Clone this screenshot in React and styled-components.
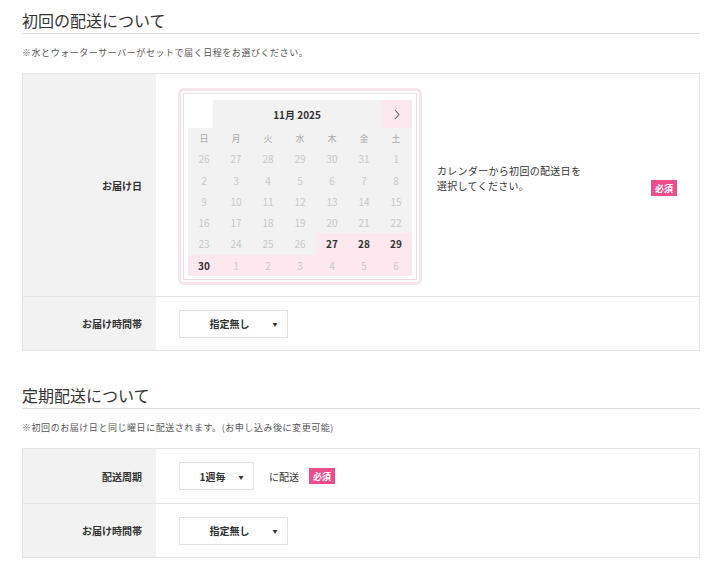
import React from 'react';
import styled, { createGlobalStyle } from 'styled-components';

const GlobalStyle = createGlobalStyle`
  body {
    margin: 0;
    background: #fff;
    font-family: "Noto Sans", "Noto Sans CJK JP", sans-serif;
    color: #333;
  }
`;

const Page = styled.div`
  padding: 10px 15px 0 22px;
`;

const Section = styled.section`
  & + & {
    margin-top: 34px;
  }
`;

const Heading = styled.h2`
  margin: 0;
  font-size: 16px;
  line-height: 21px;
  font-weight: 400;
  color: #333;
  padding-bottom: 2px;
  border-bottom: 1px solid #dcdcdc;
  font-family: "Noto Sans CJK JP", sans-serif;
`;

const Note = styled.p`
  margin: 12px 0 13px;
  font-size: 9px;
  line-height: 14px;
  letter-spacing: 0.55px;
  color: #555;
  font-family: "Noto Sans CJK JP", sans-serif;
`;

const Table = styled.div`
  border: 1px solid #e4e4e4;
`;

const Row = styled.div`
  display: flex;
  min-height: ${(p) => p.$h}px;
  & + & {
    border-top: 1px solid #e4e4e4;
  }
`;

const Label = styled.div`
  width: 133px;
  flex-shrink: 0;
  background: #f2f2f2;
  display: flex;
  align-items: center;
  justify-content: flex-end;
  padding-right: 14px;
  box-sizing: border-box;
  font-size: 10px;
  font-weight: 700;
  color: #333;
  font-family: "Noto Sans CJK JP", sans-serif;
`;

const Content = styled.div`
  flex: 1;
  display: flex;
  align-items: center;
  padding: 0 22px 0 23px;
  font-family: "Noto Sans CJK JP", sans-serif;
`;

const Badge = styled.span`
  display: inline-flex;
  align-items: center;
  justify-content: center;
  width: 26px;
  height: 16px;
  background: #ec4c8b;
  color: #fff;
  font-size: 9px;
  font-weight: 700;
  margin-left: ${(p) => (p.$auto ? 'auto' : '10px')};
  margin-top: ${(p) => (p.$auto ? '6px' : '0')};
`;

const Select = styled.div`
  display: flex;
  align-items: center;
  width: ${(p) => p.$w}px;
  height: 28px;
  box-sizing: border-box;
  border: 1px solid #e2e2e2;
  background: #fff;
  font-size: 10px;
  font-weight: 700;
  color: #333;
`;

const SelectText = styled.span`
  flex: 1;
  text-align: center;
  padding-left: 16px;
`;

const SelectArrow = styled.span`
  width: 24px;
  text-align: center;
  font-size: 5px;
  color: #333;
`;

const Suffix = styled.span`
  margin-left: 15px;
  font-size: 10px;
  color: #333;
`;

const Hint = styled.p`
  margin: 0 0 14px 15px;
  font-size: 10px;
  line-height: 15px;
  color: #333;
  letter-spacing: 0.3px;
`;

const CalendarOuter = styled.div`
  margin: 14px 0 11px -1px;
  border: 3px solid #f9e3ea;
  border-radius: 6px;
  padding: 2px;
`;

const CalendarInner = styled.div`
  border: 1px solid #f5dbe3;
  padding: 6px 4px 3px;
  width: 224px;
`;

const CalHeader = styled.div`
  display: flex;
  height: 28px;
`;

const CalPrev = styled.div`
  width: 25px;
  background: #fff;
`;

const CalTitle = styled.div`
  flex: 1;
  background: #f2f2f2;
  display: flex;
  align-items: center;
  justify-content: center;
  font-size: 10px;
  font-weight: 700;
  color: #333;
`;

const CalNext = styled.div`
  width: 31px;
  background: #fce8ee;
  display: flex;
  align-items: center;
  justify-content: center;
`;

const Grid = styled.div`
  display: grid;
  grid-template-columns: repeat(7, 32px);
  grid-template-rows: 20px;
  grid-auto-rows: 21.3px;
`;

const DayName = styled.div`
  display: flex;
  align-items: center;
  justify-content: center;
  background: #f2f2f2;
  font-size: 9px;
  color: #a8a8a8;
`;

const Cell = styled.div`
  display: flex;
  align-items: center;
  justify-content: center;
  font-size: 10px;
  background: ${(p) => (p.$kind === 'off' ? '#f2f2f2' : '#fce8ee')};
  color: ${(p) => (p.$kind === 'on' ? '#333' : '#c8c8c8')};
  font-weight: ${(p) => (p.$kind === 'on' ? 700 : 400)};
`;

const dayNames = ['日', '月', '火', '水', '木', '金', '土'];

const weeks = [
  [26, 27, 28, 29, 30, 31, 1].map((d) => [d, 'off']),
  [2, 3, 4, 5, 6, 7, 8].map((d) => [d, 'off']),
  [9, 10, 11, 12, 13, 14, 15].map((d) => [d, 'off']),
  [16, 17, 18, 19, 20, 21, 22].map((d) => [d, 'off']),
  [[23, 'off'], [24, 'off'], [25, 'off'], [26, 'off'], [27, 'on'], [28, 'on'], [29, 'on']],
  [[30, 'on'], [1, 'next'], [2, 'next'], [3, 'next'], [4, 'next'], [5, 'next'], [6, 'next']],
];

const Calendar = () => (
  <CalendarOuter>
    <CalendarInner>
      <CalHeader>
        <CalPrev />
        <CalTitle>11月 2025</CalTitle>
        <CalNext>
          <svg width="8" height="11" viewBox="0 0 8 11">
            <polyline points="2,1 6,5.5 2,10" fill="none" stroke="#666" strokeWidth="1.1" />
          </svg>
        </CalNext>
      </CalHeader>
      <Grid>
        {dayNames.map((n) => (
          <DayName key={n}>{n}</DayName>
        ))}
        {weeks.flat().map(([d, kind], i) => (
          <Cell key={i} $kind={kind}>
            {d}
          </Cell>
        ))}
      </Grid>
    </CalendarInner>
  </CalendarOuter>
);

const Dropdown = ({ w, children }) => (
  <Select $w={w}>
    <SelectText>{children}</SelectText>
    <SelectArrow>▼</SelectArrow>
  </Select>
);

export default function App() {
  return (
    <Page>
      <GlobalStyle />
      <Section>
        <Heading>初回の配送について</Heading>
        <Note>※水とウォーターサーバーがセットで届く日程をお選びください。</Note>
        <Table>
          <Row $h={222}>
            <Label>お届け日</Label>
            <Content>
              <Calendar />
              <Hint>
                カレンダーから初回の配送日を
                <br />
                選択してください。
              </Hint>
              <Badge $auto>必須</Badge>
            </Content>
          </Row>
          <Row $h={53}>
            <Label>お届け時間帯</Label>
            <Content>
              <Dropdown w={109}>指定無し</Dropdown>
            </Content>
          </Row>
        </Table>
      </Section>
      <Section>
        <Heading>定期配送について</Heading>
        <Note>※初回のお届け日と同じ曜日に配送されます。(お申し込み後に変更可能)</Note>
        <Table>
          <Row $h={54}>
            <Label>配送周期</Label>
            <Content>
              <Dropdown w={75}>1週毎</Dropdown>
              <Suffix>に配送</Suffix>
              <Badge>必須</Badge>
            </Content>
          </Row>
          <Row $h={53}>
            <Label>お届け時間帯</Label>
            <Content>
              <Dropdown w={109}>指定無し</Dropdown>
            </Content>
          </Row>
        </Table>
      </Section>
    </Page>
  );
}
